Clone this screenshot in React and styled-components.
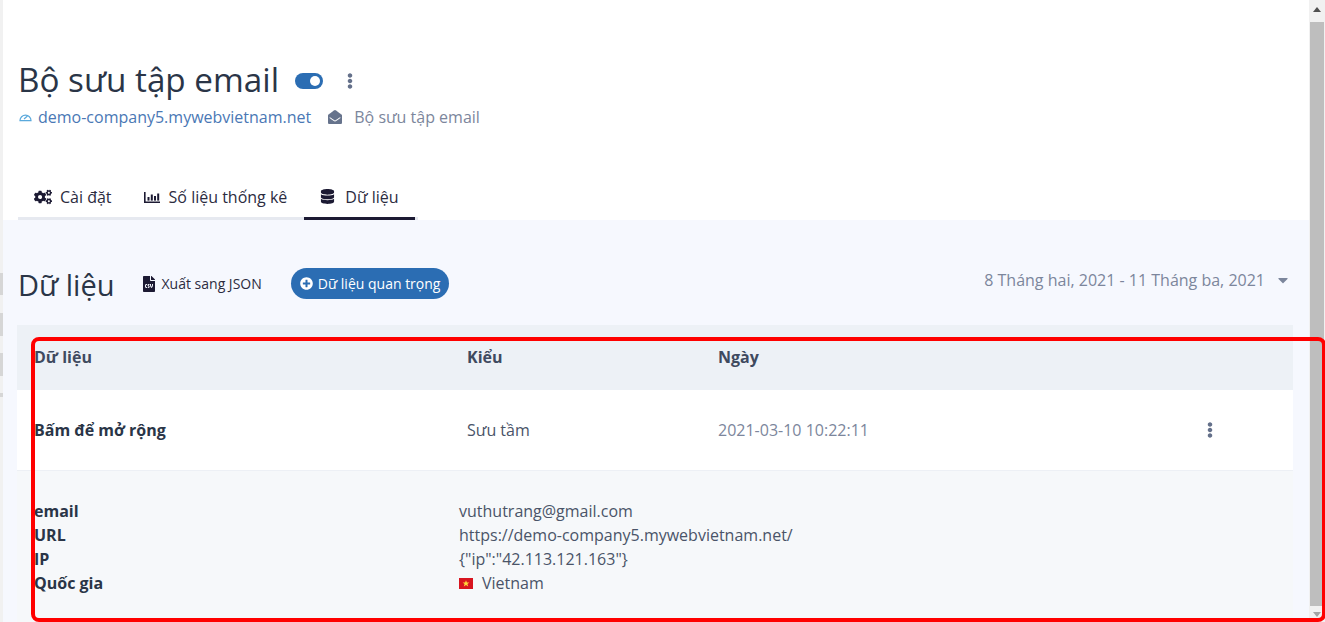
import React from 'react';
import styled, { createGlobalStyle } from 'styled-components';
import { FaCogs, FaDatabase, FaEnvelopeOpen, FaFileCsv, FaPlusCircle, FaEllipsisV, FaCaretDown } from 'react-icons/fa';

const Global = createGlobalStyle`
  html, body { margin: 0; padding: 0; height: 622px; overflow: hidden; background: #fff; }
  body { font-family: "Open Sans", "Noto Sans", sans-serif; }
  * { box-sizing: border-box; }
`;
const Page = styled.div`position: relative; display: flex; width: 1325px; height: 622px; overflow: hidden;`;
const LeftEdge = styled.div`width: 3px; flex: none; background:
  linear-gradient(to bottom, transparent 273px, #d6d6d6 273px, #d6d6d6 295px, transparent 295px, transparent 313px, #d6d6d6 313px, #d6d6d6 336px, transparent 336px, transparent 353px, #d6d6d6 353px, #d6d6d6 376px, transparent 376px, transparent 393px, #d6d6d6 393px, #d6d6d6 397px, transparent 397px),
  #f1f1f1;`;
const Main = styled.main`flex: 1; min-width: 0; display: flex; flex-direction: column;`;
const Header = styled.header`height: 220px; flex: none; background: #fff; padding: 59px 0 0 16px; display: flex; flex-direction: column;`;
const TitleRow = styled.div`display: flex; align-items: center; height: 44px;`;
const Title = styled.h1`margin: 0 0 4px -1px; font-size: 33.25px; line-height: 44px; font-weight: 500; color: #2a3547;`;
const Toggle = styled.span`position: relative; margin-left: 16px; width: 28px; height: 16px; border-radius: 8px; background: #2b6db3; display: block;
  &::after { content: ""; position: absolute; right: 3px; top: 3px; width: 10px; height: 10px; border-radius: 50%; background: #fff; }`;
const Kebab = styled.span`display: flex; margin-left: ${p => p.$ml || 20}px; color: #64708a; font-size: 16px;`;
const Meta = styled.div`display: flex; align-items: center; margin-top: 1px; height: 26px; font-size: 16px;`;
const SiteLink = styled.a`display: flex; align-items: center; gap: 6px; color: #4a78b5;`;
const Crumb = styled.span`display: flex; align-items: center; gap: 12px; margin-left: 17px; color: #7c869c; svg { color: #66738c; }`;
const Tabs = styled.nav`display: flex; margin: auto 0 0 -1px; width: 400px; border-bottom: 3px solid #e6e9f0; height: 44px;`;
const Tab = styled.a`display: flex; align-items: center; gap: ${p => p.$gap || 8}px; height: 44px; padding: 0 ${p => p.$pr || 16}px 2px 16px; font-size: 16px; color: #2c2c3f; white-space: nowrap;
  ${p => p.$active && 'border-bottom: 3px solid #1c1a33; padding-bottom: 0;'} svg { color: #1c1a33; flex: none; }`;
const Body = styled.section`flex: 1; background: #f6f8fe; padding: 0 16px 0 14px; min-height: 0;`;
const Toolbar = styled.div`display: flex; align-items: center; height: 105px; padding: 24px 2px 0 2px;`;
const H2 = styled.h2`margin: 0 0 0 -1px; font-size: 29px; font-weight: 500; color: #2a3547; line-height: 36px;`;
const ExportBtn = styled.a`display: flex; align-items: center; gap: 5px; margin-left: 26px; font-size: 14px; color: #2c2c3f; position: relative; top: -1px; svg { color: #1c1a33; }`;
const Pill = styled.a`display: flex; align-items: center; gap: 5px; margin-left: 29px; height: 31px; padding: 0 9px; border-radius: 16px; background: #2b6db3; color: #fff; font-size: 14px; position: relative; top: -1px;`;
const DateRange = styled.div`margin-left: auto; display: flex; align-items: center; gap: 10px; font-size: 16px; color: #7c869c; position: relative; top: -5px;`;
const Table = styled.div``;
const Row = styled.div`display: grid; grid-template-columns: 433px 251px 1fr 111px; align-items: center; padding-left: 17px; height: ${p => p.$h}px; background: ${p => p.$bg}; ${p => p.$line && 'border-bottom: 1px solid #edf0f5;'}`;
const HeadCell = styled.div`font-size: 16px; font-weight: 700; color: #3f4a5f; position: relative; top: -1px;`;
const Strong = styled.div`font-size: 16px; font-weight: 700; color: #2a3547;`;
const Cell = styled.div`font-size: 16px; color: ${p => p.$muted ? '#7c869c' : '#4a5468'};`;
const Details = styled.div`background: #f6f8fa; height: 160px; padding: 28px 0 0 17px; display: grid; grid-template-columns: 425px 1fr; grid-auto-rows: 24px; font-size: 16px; line-height: 24px;`;
const DKey = styled.div`font-weight: 700; color: #2a3547;`;
const DVal = styled.div`color: #4a5468; display: flex; align-items: center; gap: 9px;`;
const Track = styled.div`width: 16px; flex: none; height: 622px; background: #f1f1f1; display: flex; flex-direction: column; align-items: center; padding: 0 1px;`;
const Thumb = styled.div`flex: 1; width: 14px; background: #bebebe; margin: 22px 0 16px;`;
const Highlight = styled.div`position: absolute; left: 31px; top: 337px; width: 1295px; height: 285px; border: 4px solid #f00; border-radius: 8px; pointer-events: none;`;
const ArrowUp = styled.span`position: absolute; right: 4px; top: 7px; width: 0; height: 0; border: 4px solid transparent; border-top: 0; border-bottom: 5px solid #505050;`;
const ArrowDown = styled.span`position: absolute; right: 4px; top: 612px; width: 0; height: 0; border: 4px solid transparent; border-bottom: 0; border-top: 5px solid #a3a3a3;`;

const Gauge = () => (
  <svg width="13" height="10" viewBox="0 0 13 10" fill="none" stroke="#5aa9dc" strokeWidth="1.2">
    <path d="M1 8.6a5.5 5.5 0 0 1 11 0z" /><path d="M5 7l3.5-3" />
  </svg>
);
const Bars = () => (
  <svg width="16" height="13" viewBox="0 0 16 13" fill="#1c1a33">
    <path d="M0 1h1.6v9.6H16V12H0z" /><rect x="3.5" y="6" width="2" height="3.6" /><rect x="6.8" y="3.5" width="2" height="6.1" /><rect x="10" y="5" width="2" height="4.6" /><rect x="13.2" y="2.5" width="2" height="7.1" />
  </svg>
);
const Flag = () => (
  <svg width="14" height="11" viewBox="0 0 14 11"><rect width="14" height="11" fill="#d8151f" /><path d="M7 2.2l.9 2.4h2.5l-2 1.5.8 2.5L7 7.1 4.8 8.6l.8-2.5-2-1.5h2.5z" fill="#ffd83a" /></svg>
);

export default function App() {
  return (
    <Page>
      <Global />
      <LeftEdge />
      <Main>
        <Header>
          <TitleRow>
            <Title>Bộ sưu tập email</Title>
            <Toggle />
            <Kebab $ml={19}><FaEllipsisV /></Kebab>
          </TitleRow>
          <Meta>
            <SiteLink><Gauge />demo-company5.mywebvietnam.net</SiteLink>
            <Crumb><FaEnvelopeOpen size={14} />Bộ sưu tập email</Crumb>
          </Meta>
          <Tabs>
            <Tab><FaCogs size={18} />Cài đặt</Tab>
            <Tab $gap={9} $pr={17}><Bars />Số liệu thống kê</Tab>
            <Tab $active $gap={10}><FaDatabase size={15} />Dữ liệu</Tab>
          </Tabs>
        </Header>
        <Body>
          <Toolbar>
            <H2>Dữ liệu</H2>
            <ExportBtn><FaFileCsv size={16} />Xuất sang JSON</ExportBtn>
            <Pill><FaPlusCircle size={13} />Dữ liệu quan trọng</Pill>
            <DateRange>8 Tháng hai, 2021 - 11 Tháng ba, 2021<FaCaretDown size={16} /></DateRange>
          </Toolbar>
          <Table>
            <Row $h={65} $bg="#edf1f6">
              <HeadCell>Dữ liệu</HeadCell><HeadCell>Kiểu</HeadCell><HeadCell>Ngày</HeadCell><span />
            </Row>
            <Row $h={81} $bg="#fff" $line>
              <Strong>Bấm để mở rộng</Strong>
              <Cell>Sưu tầm</Cell>
              <Cell $muted>2021-03-10 10:22:11</Cell>
              <Kebab><FaEllipsisV /></Kebab>
            </Row>
            <Details>
              <DKey>email</DKey><DVal>vuthutrang@gmail.com</DVal>
              <DKey>URL</DKey><DVal>https://demo-company5.mywebvietnam.net/</DVal>
              <DKey>IP</DKey><DVal>{'{"ip":"42.113.121.163"}'}</DVal>
              <DKey>Quốc gia</DKey><DVal><Flag />Vietnam</DVal>
            </Details>
          </Table>
        </Body>
      </Main>
      <Track><Thumb /></Track>
      <ArrowUp /><ArrowDown />
      <Highlight />
    </Page>
  );
}
